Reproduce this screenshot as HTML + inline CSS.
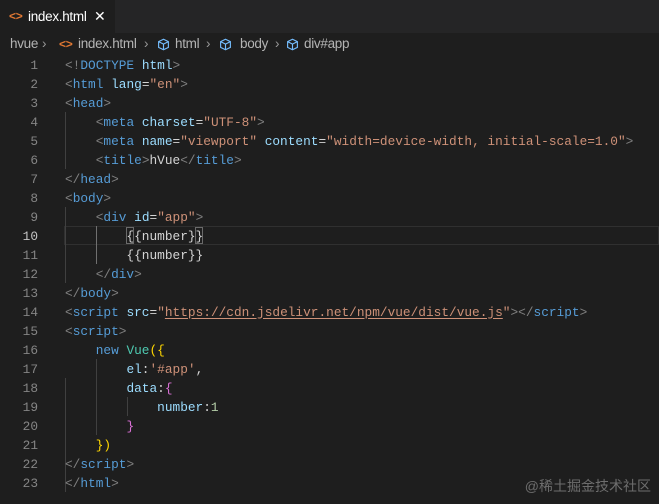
<!DOCTYPE html>
<html><head><meta charset="utf-8"><style>
*{margin:0;padding:0;box-sizing:border-box}
body{width:659px;height:504px;background:#1e1e1e;overflow:hidden;position:relative;font-family:"Liberation Sans",sans-serif}
.tabs{position:absolute;left:0;top:0;width:659px;height:33px;background:#252526}
.tab{position:absolute;left:0;top:0;width:115px;height:33px;background:#1e1e1e;color:#fff;font-size:13.5px;line-height:33px;letter-spacing:-0.3px}
.bc{position:absolute;left:0;top:34px;height:20px;width:659px;font-size:13.5px;color:#b4b4b4;line-height:20px;white-space:nowrap;letter-spacing:-0.3px}
.bc span,.bc svg{position:absolute}
.bc svg{top:4px}
.code{position:absolute;left:0;top:55.5px;font-family:"Liberation Mono",monospace;font-size:12.8px;line-height:19px;color:#d4d4d4;white-space:pre}
.ln{position:absolute;left:0;width:38px;text-align:right;color:#858585;font-family:"Liberation Mono",monospace;font-size:12.8px;line-height:19px;top:55.5px}
.ln div.a{color:#c6c6c6}
.txt{position:absolute;left:65px;top:0}
.p{color:#808080}.t{color:#569cd6}.a{color:#9cdcfe}.s{color:#ce9178}.c{color:#4ec9b0}.n{color:#b5cea8}.y{color:#ffd700}.m{color:#da70d6}
.g{position:absolute;width:1px;background:#404040}
.cur{position:absolute;left:64px;top:226px;width:595px;height:19px;border:1px solid #303030}
.bb{position:absolute;width:8px;height:17px;border:1px solid #6a6a6a}
u{text-decoration:underline;text-underline-offset:2px}
.wm{position:absolute;right:8px;bottom:8px;color:#6d6d6d;font-size:14px;font-family:"Liberation Sans","Noto Sans CJK SC",sans-serif}
.ch{color:#999}
</style></head><body>
<div class="tabs"><div class="tab"><span style="position:absolute;left:9px;color:#e37933;font-weight:bold;font-size:12px">&lt;&gt;</span><span style="position:absolute;left:28px">index.html</span><span style="position:absolute;left:94px;font-size:14px">✕</span></div></div>
<div class="bc">
<span style="left:10px">hvue</span><span class="ch" style="left:42px">›</span>
<span style="left:59px;color:#e37933;font-weight:bold;font-size:12px">&lt;&gt;</span><span style="left:78px">index.html</span><span class="ch" style="left:144px">›</span>
<svg style="left:157px" width="13" height="13" viewBox="0 0 16 16"><path d="M8 1.5L14 4.5V11.5L8 14.5L2 11.5V4.5Z M2 4.5L8 7.5L14 4.5 M8 7.5V14.5" fill="none" stroke="#75beff" stroke-width="1.4"/></svg><span style="left:175px">html</span><span class="ch" style="left:206px">›</span>
<svg style="left:219px" width="13" height="13" viewBox="0 0 16 16"><path d="M8 1.5L14 4.5V11.5L8 14.5L2 11.5V4.5Z M2 4.5L8 7.5L14 4.5 M8 7.5V14.5" fill="none" stroke="#75beff" stroke-width="1.4"/></svg><span style="left:240px">body</span><span class="ch" style="left:275px">›</span>
<svg style="left:286px" width="13" height="13" viewBox="0 0 16 16"><path d="M8 1.5L14 4.5V11.5L8 14.5L2 11.5V4.5Z M2 4.5L8 7.5L14 4.5 M8 7.5V14.5" fill="none" stroke="#75beff" stroke-width="1.4"/></svg><span style="left:304px">div#app</span></div>
<div class="cur"></div>
<div class="g" style="left:65px;top:112px;height:57px"></div>
<div class="g" style="left:65px;top:207px;height:76px"></div>
<div class="g" style="left:96px;top:226px;height:38px;background:#707070"></div>
<div class="g" style="left:65px;top:378px;height:114px"></div>
<div class="g" style="left:96px;top:359px;height:76px"></div>
<div class="g" style="left:127px;top:397px;height:19px"></div>
<div class="bb" style="left:126px;top:227px"></div>
<div class="bb" style="left:195px;top:227px"></div>
<div class="ln"><div>1</div><div>2</div><div>3</div><div>4</div><div>5</div><div>6</div><div>7</div><div>8</div><div>9</div><div class="a">10</div><div>11</div><div>12</div><div>13</div><div>14</div><div>15</div><div>16</div><div>17</div><div>18</div><div>19</div><div>20</div><div>21</div><div>22</div><div>23</div></div>
<div class="code"><div class="txt"><span class="p">&lt;!</span><span class="t">DOCTYPE</span> <span class="a">html</span><span class="p">&gt;</span>
<span class="p">&lt;</span><span class="t">html</span> <span class="a">lang</span>=<span class="s">"en"</span><span class="p">&gt;</span>
<span class="p">&lt;</span><span class="t">head</span><span class="p">&gt;</span>
    <span class="p">&lt;</span><span class="t">meta</span> <span class="a">charset</span>=<span class="s">"UTF-8"</span><span class="p">&gt;</span>
    <span class="p">&lt;</span><span class="t">meta</span> <span class="a">name</span>=<span class="s">"viewport"</span> <span class="a">content</span>=<span class="s">"width=device-width, initial-scale=1.0"</span><span class="p">&gt;</span>
    <span class="p">&lt;</span><span class="t">title</span><span class="p">&gt;</span>hVue<span class="p">&lt;/</span><span class="t">title</span><span class="p">&gt;</span>
<span class="p">&lt;/</span><span class="t">head</span><span class="p">&gt;</span>
<span class="p">&lt;</span><span class="t">body</span><span class="p">&gt;</span>
    <span class="p">&lt;</span><span class="t">div</span> <span class="a">id</span>=<span class="s">"app"</span><span class="p">&gt;</span>
        {{number}}
        {{number}}
    <span class="p">&lt;/</span><span class="t">div</span><span class="p">&gt;</span>
<span class="p">&lt;/</span><span class="t">body</span><span class="p">&gt;</span>
<span class="p">&lt;</span><span class="t">script</span> <span class="a">src</span>=<span class="s">"<u>https://cdn.jsdelivr.net/npm/vue/dist/vue.js</u>"</span><span class="p">&gt;&lt;/</span><span class="t">script</span><span class="p">&gt;</span>
<span class="p">&lt;</span><span class="t">script</span><span class="p">&gt;</span>
    <span class="t">new</span> <span class="c">Vue</span><span class="y">({</span>
        <span class="a">el</span>:<span class="s">'#app'</span>,
        <span class="a">data</span>:<span class="m">{</span>
            <span class="a">number</span>:<span class="n">1</span>
        <span class="m">}</span>
    <span class="y">})</span>
<span class="p">&lt;/</span><span class="t">script</span><span class="p">&gt;</span>
<span class="p">&lt;/</span><span class="t">html</span><span class="p">&gt;</span></div></div>
<div class="wm">@稀土掘金技术社区</div>
</body></html>
